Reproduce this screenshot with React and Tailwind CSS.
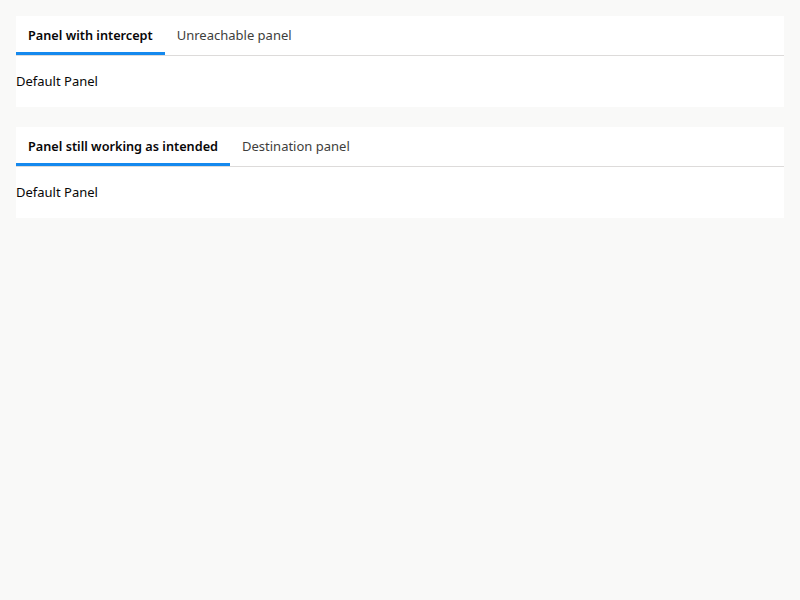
const panels = [
  { tabs: ['Panel with intercept', 'Unreachable panel'] },
  { tabs: ['Panel still working as intended', 'Destination panel'] },
];

function TabPanel({ tabs }) {
  return (
    <div className="bg-white">
      <div className="flex h-10 border-b border-[#dddbda]">
        {tabs.map((t, i) => (
          <div
            key={t}
            className={`relative flex items-center px-3 pt-px ${i === 0 ? 'text-[12.7px] font-semibold text-[#080707]' : 'text-[13px] text-[#3e3e3c]'}`}
          >
            {t}
            {i === 0 && <div className="absolute left-0 right-0 bottom-0 h-[3px] bg-[#1589ee]" />}
          </div>
        ))}
      </div>
      <div className="py-4 text-[13px] leading-[19px] text-[#080707]">Default Panel</div>
    </div>
  );
}

export default function App() {
  return (
    <div className="min-h-[600px] bg-[#f9f9f8] p-4 font-['Noto_Sans',sans-serif]">
      <div className="flex flex-col gap-5">
        {panels.map((p, i) => (
          <TabPanel key={i} tabs={p.tabs} />
        ))}
      </div>
    </div>
  );
}
